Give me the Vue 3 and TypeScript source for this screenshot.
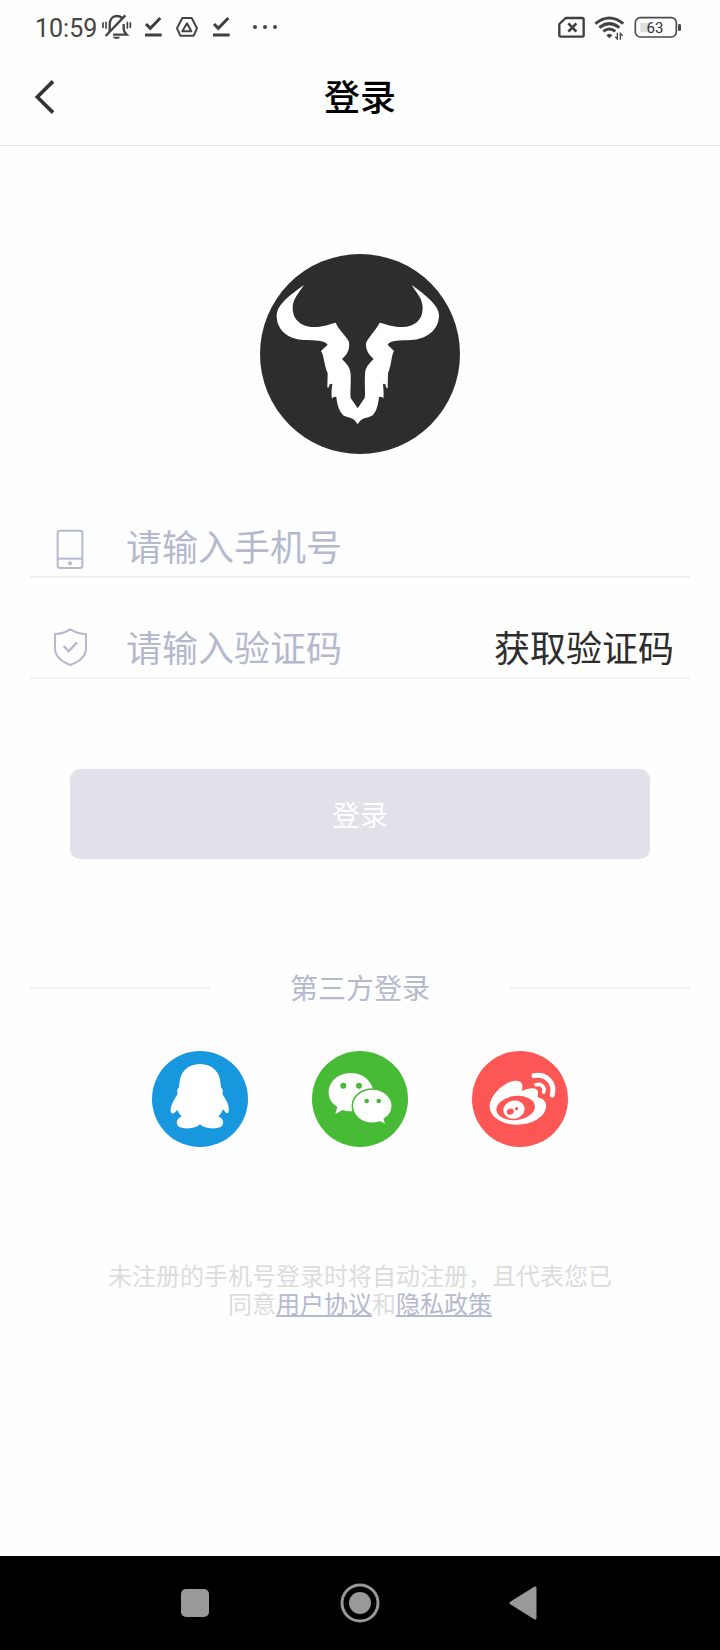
<script setup lang="ts">
import { ref } from 'vue'

const phone = ref<string>('')
const code = ref<string>('')
</script>

<template>
  <div class="screen">
    <div class="status">
      <div class="status-left">
        <span class="clock">10:59</span>
        <svg class="bell" viewBox="303 39 93 84" fill="none" stroke="#444" stroke-width="7">
          <path d="M329 95V74C329 57 338 48 350 48c8 0 14 3 18 8M371 72v14c0 9 3 12 9 18H339M317 108l59-62" />
          <path d="M339 110h21c-2 9-19 9-21 0z" fill="#444" stroke="none" />
          <path d="M309 67v17M318 65v21M382 65v21M391 67v17" stroke-width="5" />
        </svg>
        <svg class="tick" viewBox="432 48 57 66" fill="none" stroke="#3f3f3f" stroke-width="9">
          <path d="M438 72l13 13 30-31M435 105h50" />
        </svg>
        <svg class="drive" viewBox="528 51 66 63" fill="none" stroke="#444" stroke-width="6" stroke-linejoin="round">
          <path d="M547 54h28l16 31-10 22h-40l-10-22z" />
          <path d="M561 70l13 24h-27z" stroke-width="6" />
        </svg>
        <svg class="tick" viewBox="636 48 57 66" fill="none" stroke="#3f3f3f" stroke-width="9">
          <path d="M642 72l13 13 30-31M639 105h50" />
        </svg>
        <svg class="dots" viewBox="756 69 78 24" fill="#444">
          <circle cx="765" cy="81" r="6" /><circle cx="795" cy="81" r="6" /><circle cx="825" cy="81" r="6" />
        </svg>
      </div>
      <div class="status-right">
        <svg class="sim" viewBox="51 48 84 66" fill="none" stroke="#3f3f3f" stroke-width="7">
          <path d="M77 54h50q4 0 4 4v48q0 4-4 4H62q-4 0-4-4V72z" stroke-linejoin="round" />
          <path d="M85 70l24 25M109 70L85 95" stroke-width="8" />
        </svg>
        <svg class="wifi" viewBox="162 42 93 75" fill="none" stroke="#444" stroke-width="9">
          <path d="M166 68q42-34 84 0M178 80q30-24 60 0M190 91q18-14 36 0" />
          <path d="M199 103q9-9 18 0l-9 9z" fill="#444" stroke="none" />
          <path d="M232 95v19l-6-7M241 116V97l7 7" stroke-width="4" />
        </svg>
        <svg class="battery" viewBox="282 45 144 69">
          <rect x="286" y="50" width="123" height="58" rx="15" fill="none" stroke="#4a4a4a" stroke-width="5" />
          <rect x="301" y="65" width="27" height="29" rx="3" fill="#ddd" />
          <rect x="414" y="69" width="9" height="21" rx="4" fill="#4a4a4a" />
          <text x="345" y="95" text-anchor="middle" class="charge">63</text>
        </svg>
      </div>
    </div>

    <header class="header">
      <button class="back" type="button" aria-label="返回">
        <svg viewBox="102 240 63 108" fill="none" stroke="#333" stroke-width="11">
          <path d="M159 244l-47 47 47 47" />
        </svg>
      </button>
      <h1>登录</h1>
    </header>

    <main>
      <svg class="logo" viewBox="30 27 600 600" aria-hidden="true">
        <circle cx="330" cy="327" r="300" fill="#2d2d2d" />
        <g fill="#fff">
          <path d="M162 120C116 153 80 180 80 213C80 260 122 284 162 285C197 287 222 284 233 299L213 318C222 330 221 356 233 385L232 427Q236 432 239 418L247 416C245 433 243 446 246 461Q249 454 259 456C262 483 268 499 281 512C301 520 312 517 323 538C334 517 345 521 366 512C379 502 384 482 387 456Q398 454 400 461C402 446 400 430 399 416L406 418Q409 433 413 429L414 385C426 355 423 333 432 318L413 299C422 284 449 287 484 285C525 284 567 258 567 211C567 182 531 153 485 120C501 146 518 160 518 190C518 228 490 247 455 246C430 247 409 237 389 233C381 251 356 276 349 292C345 309 353 327 371 342C357 357 345 366 345 389C343 418 347 448 344 459L323 490L302 459C300 443 303 419 302 389C301 366 289 356 276 342C292 329 300 313 297 291C292 276 266 255 257 233C238 237 217 247 191 246C156 246 128 226 128 189C128 163 146 144 162 120z" />
        </g>
      </svg>

      <form class="form" @submit.prevent>
        <div class="field">
          <label for="phone" aria-label="手机号">
            <svg viewBox="99 51 102 126" fill="none" stroke="#b5b9ce" stroke-width="6">
              <rect x="113" y="62" width="74" height="112" rx="6" />
              <path d="M113 146h74" />
              <circle cx="150" cy="160" r="6" fill="#b5b9ce" stroke="none" />
            </svg>
          </label>
          <input id="phone" v-model="phone" type="tel" placeholder="请输入手机号" />
        </div>
        <div class="field">
          <label for="code" aria-label="验证码">
            <svg viewBox="99 351 102 126" fill="none" stroke="#b5b9ce" stroke-width="6">
              <path d="M151 355Q131 368 105 369V411Q105 445 151 462Q198 445 198 411V369Q171 368 151 355z" stroke-linejoin="round" />
              <path d="M131 405l15 16 25-27" stroke-width="7" />
            </svg>
          </label>
          <input id="code" v-model="code" type="text" placeholder="请输入验证码" />
          <button class="get-code" type="button">获取验证码</button>
        </div>
        <button class="submit" type="submit">登录</button>
      </form>

      <div class="divider"><span>第三方登录</span></div>

      <div class="socials">
        <button type="button" aria-label="QQ">
          <svg viewBox="36 33 288 288">
            <circle cx="180" cy="177" r="144" fill="#1697de" />
            <path fill="#fff" d="M180 72C143 72 118 97 118 134Q119 141 112 149V164C99 182 88 206 93 216Q97 228 112 209Q115 220 125 230C107 235 107 254 118 261C137 269 169 265 180 253C191 265 223 269 242 261C253 254 253 235 235 230Q245 220 249 208Q263 228 266 214C269 199 260 180 248 164V149Q241 141 242 134C242 97 217 72 180 72z" />
          </svg>
        </button>
        <button type="button" aria-label="微信">
          <svg viewBox="516 33 288 288">
            <circle cx="660" cy="177" r="144" fill="#48bb36" />
            <path fill="#fff" d="M632 99C596 99 566 124 566 157C566 176 576 191 592 201L586 222L608 210Q621 215 640 213L699 148C692 119 666 99 632 99z" />
            <path fill="#fff" stroke="#48bb36" stroke-width="5" d="M697 147C664 147 637 169 637 198C637 228 664 250 697 250Q709 250 719 246L739 256L733 237C748 228 757 214 757 198C757 170 731 147 697 147z" />
            <g fill="#48bb36"><circle cx="610" cy="137" r="9" /><circle cx="657" cy="137" r="9" /><circle cx="680" cy="183" r="7" /><circle cx="716" cy="183" r="7" /></g>
          </svg>
        </button>
        <button type="button" aria-label="微博">
          <svg viewBox="216 33 288 288">
            <circle cx="360" cy="177" r="144" fill="#fd5755" />
            <path fill="#fff" d="M365 153C403 137 421 145 412 171C431 176 440 186 438 202C434 235 389 256 344 254C303 252 269 230 269 199C269 168 311 125 346 122C366 121 371 134 365 153z" />
            <ellipse cx="347" cy="204" rx="58" ry="36" fill="#fd5755" transform="rotate(-7 347 204)" />
            <ellipse cx="342" cy="209" rx="32" ry="27" fill="#fff" transform="rotate(-12 342 209)" />
            <ellipse cx="331" cy="215" rx="11" ry="9" fill="#fd5755" transform="rotate(-20 331 215)" />
            <circle cx="350" cy="206" r="5" fill="#fd5755" />
            <g fill="none" stroke="#fff" stroke-linecap="round">
              <path d="M402 107C438 100 466 128 457 165" stroke-width="15" />
              <path d="M408 134C425 130 436 141 431 156" stroke-width="11" />
            </g>
          </svg>
        </button>
      </div>

      <p class="terms">未注册的手机号登录时将自动注册，且代表您已同意<a href="#terms">用户协议</a>和<a href="#privacy">隐私政策</a></p>
    </main>

    <nav class="navbar" aria-label="系统导航">
      <button type="button" aria-label="最近任务">
        <svg viewBox="0 0 40 40"><rect x="6" y="6" width="28" height="28" rx="5" fill="#999" /></svg>
      </button>
      <button type="button" aria-label="主屏幕">
        <svg viewBox="0 0 40 40"><circle cx="20" cy="20" r="18" fill="none" stroke="#999" stroke-width="3" /><circle cx="20" cy="20" r="11" fill="#999" /></svg>
      </button>
      <button type="button" aria-label="后退">
        <svg viewBox="0 0 40 40"><path d="M6 20L30 5v30z" fill="#999" stroke="#999" stroke-width="3" stroke-linejoin="round" /></svg>
      </button>
    </nav>
  </div>
</template>

<style>
body {
  margin: 0;
}
</style>

<style scoped>
.screen {
  min-height: 100vh;
  display: flex;
  flex-direction: column;
  background: #fefefe;
  color: #2d2d2d;
  font-family: Roboto, "Noto Sans CJK SC", sans-serif;
}
button {
  padding: 0;
  border: 0;
  background: none;
  color: inherit;
  font-family: inherit;
  cursor: pointer;
}
svg {
  display: block;
  flex: none;
}
.status {
  height: 50px;
  padding: 4px 38px 0 35px;
  box-sizing: border-box;
  display: flex;
  justify-content: space-between;
}
.status-left,
.status-right {
  display: flex;
  align-items: center;
}
.clock {
  padding-top: 2px;
  font-size: 25px;
  color: #444;
  margin-right: 4px;
}
.bell {
  width: 31px;
  height: 28px;
  margin-right: 12px;
}
.tick {
  width: 19px;
  height: 22px;
}
.drive {
  width: 22px;
  height: 21px;
  margin: 0 14px 0 13px;
}
.dots {
  width: 26px;
  height: 8px;
  margin-left: 21px;
}
.sim {
  width: 28px;
  height: 22px;
  margin-right: 9px;
}
.wifi {
  width: 31px;
  height: 25px;
  margin-right: 9px;
}
.battery {
  width: 48px;
  height: 23px;
}
.charge {
  font: 400 45px Roboto, sans-serif;
  fill: #333;
}
.header {
  height: 96px;
  box-sizing: border-box;
  padding: 0 34px;
  border-bottom: 1px solid #e2e2e2;
  display: grid;
  grid-template-columns: 40px 1fr 40px;
  align-items: center;
}
.back svg {
  width: 21px;
  height: 36px;
}
h1 {
  margin: 0;
  padding-top: 2px;
  text-align: center;
  color: #000;
  font-size: 36px;
  line-height: 48px;
  font-weight: 500;
}
main {
  padding: 108px 30px 40px;
}
.logo {
  width: 200px;
  height: 200px;
  margin: 0 auto 54px;
}
.field {
  height: 70px;
  box-sizing: border-box;
  padding: 0 16px 0 23px;
  border-bottom: 2px solid #f1f1f3;
  display: flex;
  align-items: center;
}
.field + .field {
  margin-top: 31px;
}
.field label svg {
  width: 34px;
  height: 42px;
  margin-top: 12px;
}
.field input {
  flex: 1;
  min-width: 0;
  height: 52px;
  margin: 14px 0 0 39px;
  padding: 0;
  border: 0;
  outline: 0;
  background: none;
  color: #2d2d2d;
  font-family: inherit;
  font-size: 36px;
}
.field input::placeholder {
  color: #b5b9ce;
  opacity: 1;
}
.get-code {
  margin-top: 14px;
  font-size: 36px;
  line-height: 52px;
  white-space: nowrap;
}
.submit {
  display: block;
  width: calc(100% - 80px);
  height: 90px;
  margin: 90px auto 0;
  border-radius: 10px;
  background: #e1e1ea;
  color: #fff;
  font-size: 28px;
}
.divider {
  margin-top: 108px;
  display: flex;
  align-items: center;
  justify-content: space-between;
  gap: 80px;
  color: #b5b9ce;
  font-size: 28px;
  line-height: 38px;
}
.divider span {
  padding-top: 4px;
}
.divider::before,
.divider::after {
  content: "";
  flex: 1;
  height: 2px;
  background: #f1f1f3;
}
.socials {
  margin-top: 42px;
  display: flex;
  justify-content: center;
  gap: 64px;
}
.socials svg {
  width: 96px;
  height: 96px;
}
.terms {
  max-width: 520px;
  margin: 116px auto 0;
  text-align: center;
  color: #dcdcdc;
  font-size: 24px;
  line-height: 28px;
}
.terms a {
  color: #b5b9ce;
  text-decoration: underline;
}
.navbar {
  height: 94px;
  margin-top: auto;
  padding: 0 175px;
  background: #000;
  display: flex;
  align-items: center;
  justify-content: space-between;
}
.navbar svg {
  width: 40px;
  height: 40px;
}
</style>
